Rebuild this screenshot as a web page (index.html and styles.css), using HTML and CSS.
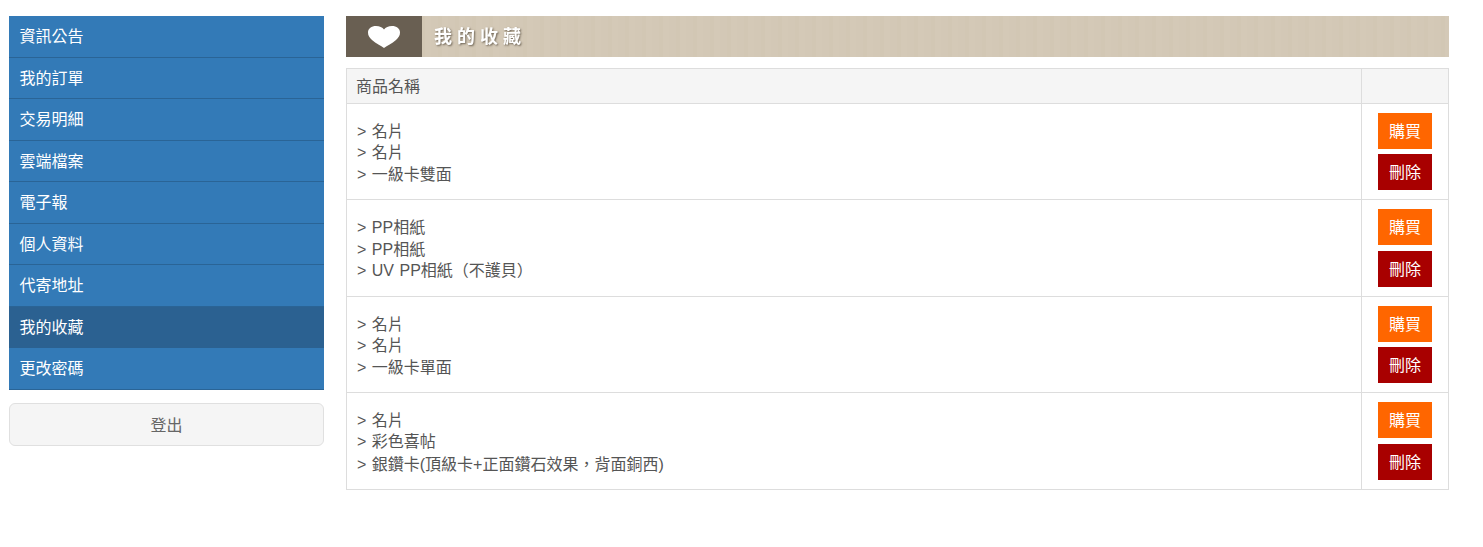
FILE: index.html
```html
<!DOCTYPE html>
<html lang="zh-Hant">
<head>
<meta charset="utf-8">
<title>我的收藏</title>
<link rel="stylesheet" href="styles.css">
</head>
<body>
<div class="page">
  <aside class="sidebar">
    <nav class="menu">
      <a class="menu-item" href="#">資訊公告</a>
      <a class="menu-item" href="#">我的訂單</a>
      <a class="menu-item" href="#">交易明細</a>
      <a class="menu-item" href="#">雲端檔案</a>
      <a class="menu-item" href="#">電子報</a>
      <a class="menu-item" href="#">個人資料</a>
      <a class="menu-item" href="#">代寄地址</a>
      <a class="menu-item active" href="#">我的收藏</a>
      <a class="menu-item" href="#">更改密碼</a>
    </nav>
    <a class="logout" href="#">登出</a>
  </aside>
  <main class="content">
    <header class="banner">
      <div class="banner-icon">
        <svg class="heart" width="32" height="22" viewBox="0 0 32 22"><path fill="#fff" d="M16 22 C13 19.500 8 17.500 4 14 C1.500 11.800 0 9.500 0 6.500 C0 2.500 3.500 0 8 0 C11.500 0 14.500 1.300 16 3.500 C17.500 1.300 20.500 0 24 0 C28.500 0 32 2.500 32 6.500 C32 9.500 30.500 11.800 28 14 C24 17.500 19 19.500 16 22 Z"/></svg>
      </div>
      <h1 class="banner-title">我的收藏</h1>
    </header>
    <table class="favorites">
      <thead>
        <tr><th class="name-col">商品名稱</th><th class="action-col"></th></tr>
      </thead>
      <tbody>
        <tr>
          <td class="name-cell">&gt; 名片<br>&gt; 名片<br>&gt; 一級卡雙面</td>
          <td class="action-cell"><a class="btn buy" href="#">購買</a><a class="btn del" href="#">刪除</a></td>
        </tr>
        <tr>
          <td class="name-cell">&gt; PP相紙<br>&gt; PP相紙<br>&gt; UV PP相紙（不護貝）</td>
          <td class="action-cell"><a class="btn buy" href="#">購買</a><a class="btn del" href="#">刪除</a></td>
        </tr>
        <tr>
          <td class="name-cell">&gt; 名片<br>&gt; 名片<br>&gt; 一級卡單面</td>
          <td class="action-cell"><a class="btn buy" href="#">購買</a><a class="btn del" href="#">刪除</a></td>
        </tr>
        <tr>
          <td class="name-cell">&gt; 名片<br>&gt; 彩色喜帖<br>&gt; 銀鑽卡(頂級卡+正面鑽石效果<span class="punct">，</span>背面銅西)</td>
          <td class="action-cell"><a class="btn buy" href="#">購買</a><a class="btn del" href="#">刪除</a></td>
        </tr>
      </tbody>
    </table>
  </main>
</div>
</body>
</html>
```
FILE: styles.css
```css
* { box-sizing: border-box; }
html, body { margin: 0; padding: 0; background: #fff; }
body {
  font-family: "Liberation Sans", "Noto Sans CJK TC", sans-serif;
  font-size: 16px;
  line-height: 21.43px;
  color: #555;
}
a { text-decoration: none; }
.page {
  display: flex;
  align-items: flex-start;
  gap: 22px;
  padding: 16px 34px 0 9px;
}
.sidebar { flex: 0 0 315px; }
.menu { display: flex; flex-direction: column; }
.menu-item {
  display: block;
  height: 41.5px;
  padding: 10.45px 10.5px;
  background: #337ab7;
  border-bottom: 1px solid #2a6496;
  color: #fff;
}
.menu-item.active { background: #2b6191; border-bottom-color: #2b6191; }
.logout {
  display: block;
  height: 43px;
  margin-top: 13.5px;
  padding-top: 11px;
  text-align: center;
  color: #666;
  background: #f5f5f5;
  border: 1px solid #e0e0e0;
  border-radius: 6px;
}
.content { flex: 1 1 auto; min-width: 0; }
.banner {
  display: flex;
  height: 41px;
  background: repeating-linear-gradient(90deg, #d3c8b6 0, #d3c8b6 7px, #d2c7b4 7px, #d2c7b4 11px, #d4c9b7 11px, #d4c9b7 17px);
}
.banner-icon {
  flex: 0 0 76px;
  display: flex;
  align-items: center;
  justify-content: center;
  padding-right: 1px;
  background: #695f52;
}
.banner-title {
  margin: 0;
  padding: 0 0 0 12px;
  font-size: 18px;
  font-weight: 700;
  line-height: 43px;
  letter-spacing: 5px;
  color: #fff;
  text-shadow: 1px 1px 2px #6f6556;
  filter: blur(0.5px);
}
.favorites {
  width: 100%;
  margin-top: 11px;
  border-collapse: collapse;
  table-layout: fixed;
}
.favorites th, .favorites td { border: 1px solid #ddd; }
.favorites th {
  height: 34.7px;
  background: #f5f5f5;
  font-weight: 400;
  text-align: left;
  padding: 7px 9px 5px;
}
.action-col { width: 87px; }
.name-cell {
  padding: 10.4px 10px 7.6px;
  height: 96.5px;
  color: #555;
  word-spacing: 1px;
}
.punct { font-family: "Noto Sans CJK JP", sans-serif; }
.action-cell { padding: 9px 16px 0; vertical-align: top; }
.btn {
  display: block;
  width: 54px;
  height: 36px;
  margin-bottom: 5.4px;
  line-height: 38px;
  text-align: center;
  color: #fff;
}
.buy { background: #ff6600; }
.del { background: #a80000; }
```
